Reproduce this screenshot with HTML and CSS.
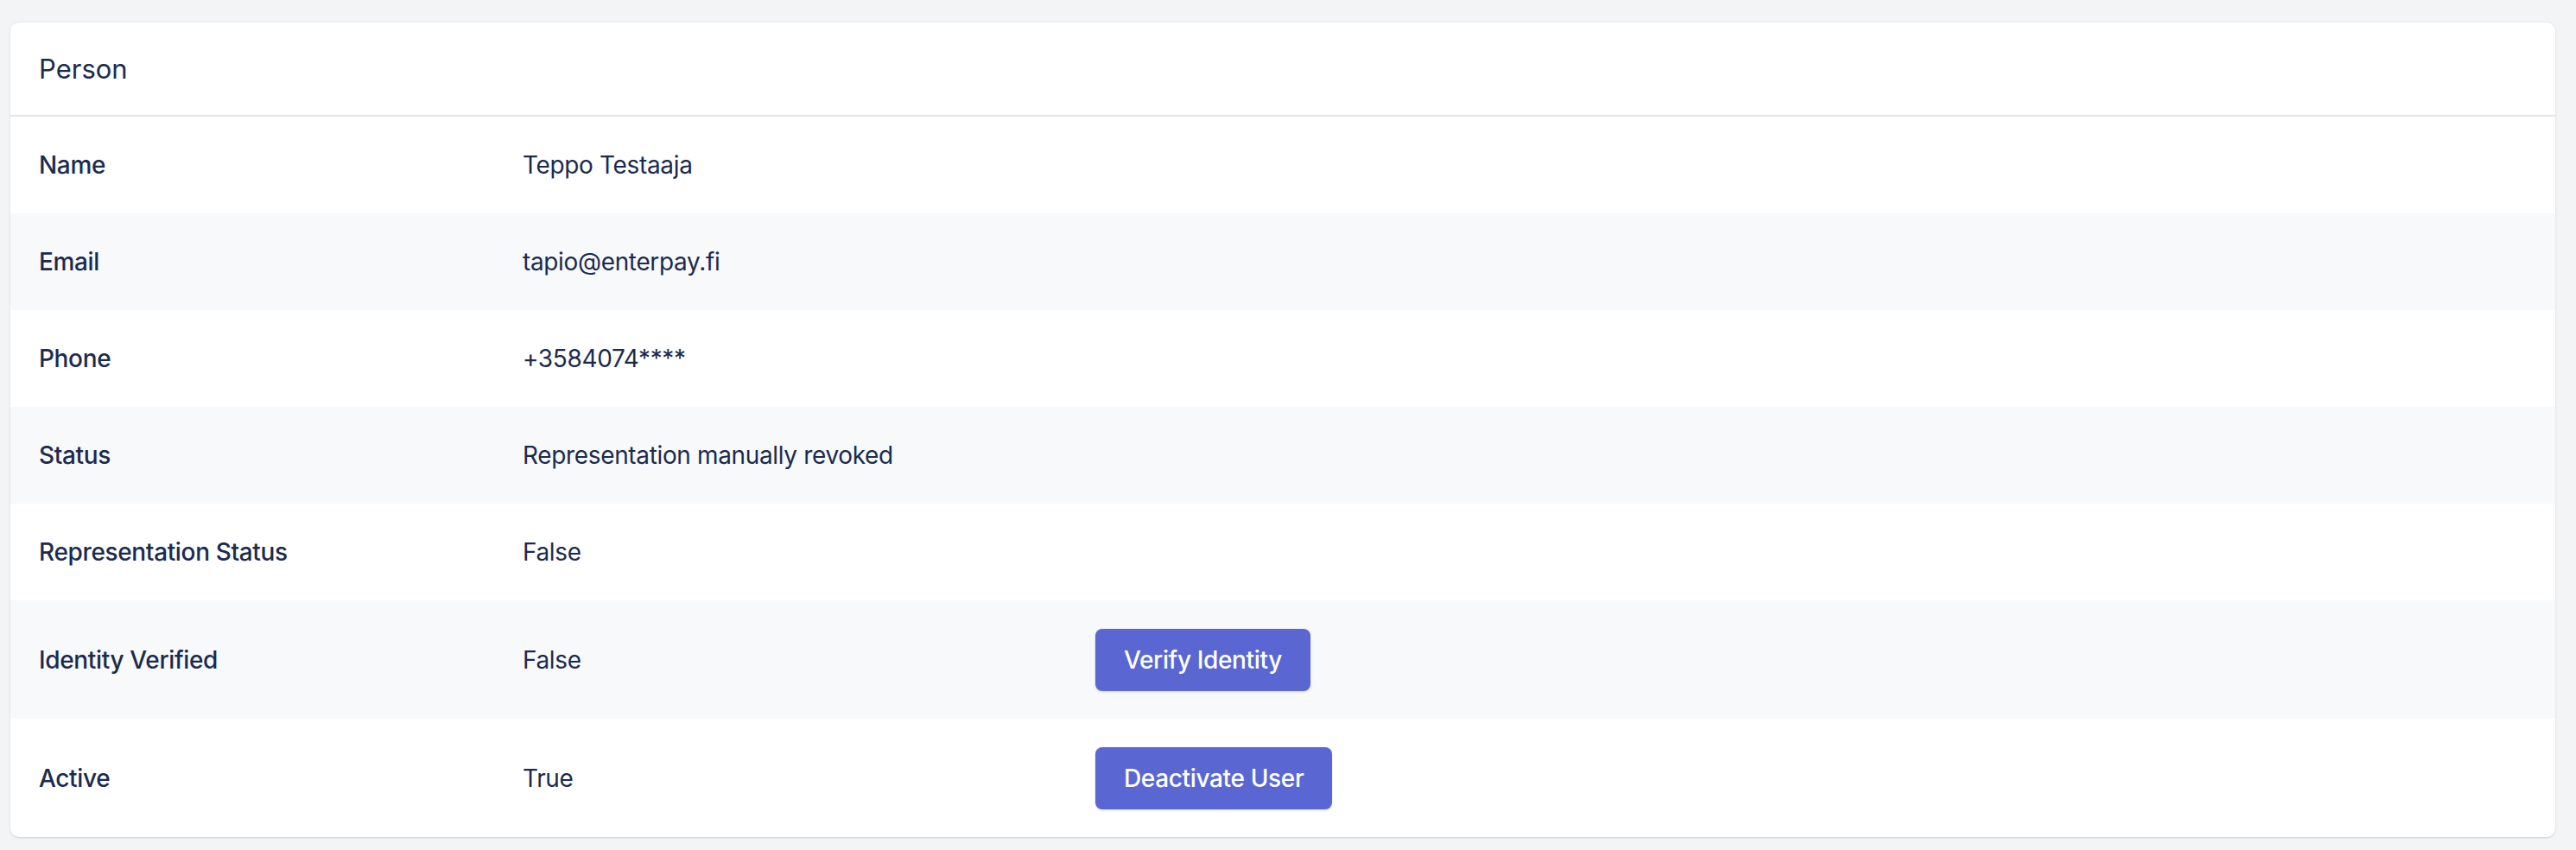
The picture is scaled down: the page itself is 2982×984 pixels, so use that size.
FILE: index.html
```html
<!DOCTYPE html>
<html>
<head>
<meta charset="utf-8">
<link rel="stylesheet" href="styles.css">
</head>
<body>
<div class="page">
  <section class="card">
    <header class="card-header">Person</header>
    <div class="rows">
      <div class="row">
        <div class="label">Name</div>
        <div class="value">Teppo Testaaja</div>
        <div class="action"></div>
      </div>
      <div class="row alt">
        <div class="label">Email</div>
        <div class="value">tapio@enterpay.fi</div>
        <div class="action"></div>
      </div>
      <div class="row">
        <div class="label">Phone</div>
        <div class="value">+3584074****</div>
        <div class="action"></div>
      </div>
      <div class="row alt">
        <div class="label">Status</div>
        <div class="value">Representation manually revoked</div>
        <div class="action"></div>
      </div>
      <div class="row">
        <div class="label">Representation Status</div>
        <div class="value">False</div>
        <div class="action"></div>
      </div>
      <div class="row alt with-btn">
        <div class="label">Identity Verified</div>
        <div class="value">False</div>
        <div class="action"><button class="btn">Verify Identity</button></div>
      </div>
      <div class="row with-btn">
        <div class="label">Active</div>
        <div class="value">True</div>
        <div class="action"><button class="btn">Deactivate User</button></div>
      </div>
    </div>
  </section>
</div>
</body>
</html>
```

FILE: styles.css
```css
html, body {
  margin: 0;
  padding: 0;
  background: #f3f4f6;
}
body {
  font-family: Inter, "Noto Sans", sans-serif;
  color: #1b2b4e;
}
.page {
  padding: 25px 24px 15px 12px;
}
.card {
  background: #ffffff;
  border-radius: 10px;
  box-shadow: 0 1px 3px rgba(0, 0, 0, 0.1), 0 1px 2px rgba(0, 0, 0, 0.06);
  border-top: 1px solid #e8e9ec;
  overflow: hidden;
}
.card-header {
  height: 107px;
  display: flex;
  align-items: center;
  padding-left: 33px;
  font-size: 31px;
  font-weight: 400;
  border-bottom: 2px solid #e3e4e7;
}
.row {
  display: grid;
  grid-template-columns: 560px 663px 1fr;
  align-items: center;
  height: 112px;
  padding-left: 33px;
  font-size: 28px;
  letter-spacing: -0.35px;
}
.row.alt {
  background: #f8f9fb;
}
.row.with-btn {
  height: 137px;
}
.label {
  font-weight: 500;
}
.value {
  font-weight: 400;
}
.btn {
  font-family: Inter, "Noto Sans", sans-serif;
  font-size: 28px;
  font-weight: 500;
  letter-spacing: -0.35px;
  color: #ffffff;
  background: #5a67d3;
  border: none;
  border-radius: 8px;
  height: 72px;
  padding: 0 33px;
  box-shadow: 0 1px 3px rgba(0, 0, 0, 0.15);
}
```
